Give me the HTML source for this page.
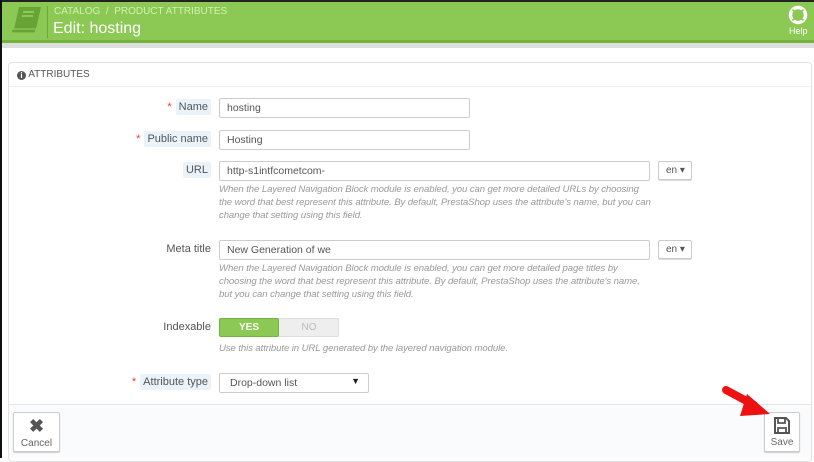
<!DOCTYPE html>
<html><head><meta charset="utf-8"><style>
*{box-sizing:border-box;margin:0;padding:0}
body{width:814px;height:458px;overflow:hidden;background:#fff;font-family:"Liberation Sans",sans-serif;font-size:11px;color:#555;position:relative}
.abs{position:absolute}
.hdr{left:0;top:0;width:814px;height:41px;background:#8bc954;border-top:2px solid #222}
.hdr2{left:0;top:40px;width:814px;height:3px;background:#72b33c}
.hdr3{left:0;top:43px;width:814px;height:5px;background:#dedede}
.bc{left:54px;top:6px;color:#d2efb6;font-size:10px}
.title{left:53px;top:20px;color:#fff;font-size:16px}
.sep{left:47px;top:6px;width:1px;height:32px;background:#6ea83c}
.panel{left:8px;top:62px;width:804px;height:400px;border:1px solid #e2e2e2;border-radius:4px}
.ph{left:9px;top:63px;width:802px;height:24px;border-bottom:1px solid #eee;font-size:10px;color:#555;padding:6px 0 0 8px}
.lbl{text-align:right;font-size:11px;color:#555}
.lb{background:#eaf3fa;padding:2px 3px;border-radius:2px}
.star{color:#e63c3c;margin-right:4px}
.inp{border:1px solid #ccc;border-radius:2px;height:20px;padding:3px 7px;font-size:10.5px;color:#555;background:#fff}
.help{font-style:italic;color:#999;font-size:9.6px;line-height:13px;width:432px;letter-spacing:-0.1px}
.en{border:1px solid #ccc;border-radius:2px;height:19px;width:34px;font-size:10px;padding:3px 0 0 7px;box-shadow:0 1px 0 #ddd;background:#fff}
.foot{left:9px;top:404px;width:802px;height:54px;background:#fafbfc;border-top:1px solid #e6e6e6}
.btn{border:1px solid #ccc;background:#fff;border-radius:2px;text-align:center;font-size:10px;color:#666;box-shadow:0 1px 1px #ccc}
</style></head><body>
<div class="abs" style="left:0;top:0;width:2px;height:458px;background:#111;z-index:9"></div>
<div class="abs hdr"></div><div class="abs hdr2"></div><div class="abs hdr3"></div>
<svg class="abs" style="left:10px;top:6px" width="34" height="30" viewBox="0 0 34 30"><path d="M9 1h22l-5 22H4z" fill="#68a337"/><path d="M4 23h22l-1 4H3c-2 0-2-4 1-4z" fill="#68a337" stroke="#8bc954" stroke-width="1.2"/><path d="M13 6h11M12 10h11" stroke="#8bc954" stroke-width="2"/></svg>
<div class="abs sep"></div>
<div class="abs bc">CATALOG &nbsp;/ &nbsp;PRODUCT ATTRIBUTES</div>
<div class="abs title">Edit: hosting</div>
<svg class="abs" style="left:788px;top:5px" width="20" height="20" viewBox="0 0 20 20"><circle cx="10" cy="10" r="7.5" fill="none" stroke="#fff" stroke-width="3.5"/><path d="M4.5 4.5l3 3M15.5 4.5l-3 3M4.5 15.5l3-3M15.5 15.5l-3-3" stroke="#8bc954" stroke-width="1.6"/></svg>
<div class="abs" style="left:789px;top:26px;color:#fff;font-size:9px">Help</div>

<div class="abs panel"></div>
<div class="abs ph"><span style="display:inline-block;width:9px;height:9px;border-radius:50%;background:#555;color:#fff;font-size:8px;text-align:center;line-height:9px;font-weight:bold;vertical-align:-1px">i</span> ATTRIBUTES</div>

<div class="abs lbl" style="left:100px;top:101px;width:111px"><span class="star">*</span><span class="lb">Name</span></div>
<div class="abs inp" style="left:219px;top:98px;width:251px">hosting</div>
<div class="abs lbl" style="left:100px;top:133px;width:111px"><span class="star">*</span><span class="lb">Public name</span></div>
<div class="abs inp" style="left:219px;top:130px;width:251px">Hosting</div>
<div class="abs lbl" style="left:100px;top:164px;width:111px"><span class="lb">URL</span></div>
<div class="abs inp" style="left:219px;top:161px;width:431px">http-s1intfcometcom-</div>
<div class="abs en" style="left:658px;top:161px">en &#9662;</div>
<div class="abs help" style="left:219px;top:183px">When the Layered Navigation Block module is enabled, you can get more detailed URLs by choosing the word that best represent this attribute. By default, PrestaShop uses the attribute's name, but you can change that setting using this field.</div>

<div class="abs lbl" style="left:100px;top:243px;width:111px">Meta title</div>
<div class="abs inp" style="left:219px;top:240px;width:431px">New Generation of we</div>
<div class="abs en" style="left:658px;top:240px">en &#9662;</div>
<div class="abs help" style="left:219px;top:262px">When the Layered Navigation Block module is enabled, you can get more detailed page titles by choosing the word that best represent this attribute. By default, PrestaShop uses the attribute's name, but you can change that setting using this field.</div>

<div class="abs lbl" style="left:100px;top:321px;width:111px">Indexable</div>
<div class="abs" style="left:219px;top:318px;width:120px;height:19px;background:#eee;border:1px solid #ddd;border-radius:2px"></div>
<div class="abs" style="left:219px;top:318px;width:60px;height:19px;background:#8bc954;border:1px solid #72b33c;border-radius:2px;color:#fff;font-size:10px;font-weight:bold;text-align:center;line-height:17px">YES</div>
<div class="abs" style="left:279px;top:318px;width:60px;height:19px;color:#bbb;font-size:10px;text-align:center;line-height:19px">NO</div>
<div class="abs help" style="left:219px;top:342px;width:500px">Use this attribute in URL generated by the layered navigation module.</div>

<div class="abs lbl" style="left:100px;top:376px;width:111px"><span class="star">*</span><span class="lb">Attribute type</span></div>
<div class="abs inp" style="left:219px;top:373px;width:150px;padding-left:10px">Drop-down list<span style="position:absolute;right:8px;top:2px;font-size:9px;color:#222">&#9660;</span></div>

<div class="abs foot"></div>
<div class="abs btn" style="left:13px;top:412px;width:47px;height:40px"><div style="font-size:18px;font-weight:bold;color:#555;line-height:22px;margin-top:2px">&#10006;</div><div style="margin-top:1px">Cancel</div></div>
<div class="abs btn" style="left:764px;top:412px;width:36px;height:40px">
<svg style="margin-top:4px" width="16" height="17" viewBox="0 0 16 17"><path d="M1 1h11l3 3v12H1z" fill="none" stroke="#555" stroke-width="2"/><path d="M4 1v5h7V1M4 16v-5h8v5" fill="none" stroke="#555" stroke-width="1.8"/></svg>
<div>Save</div></div>
<svg class="abs" style="left:720px;top:384px" width="54" height="36" viewBox="0 0 54 36"><path d="M6 6 L34 21" stroke="#e11" stroke-width="8" stroke-linecap="round"/><path d="M27 10 L50 30 L20 32 Z" fill="#e11"/></svg>
</body></html>
